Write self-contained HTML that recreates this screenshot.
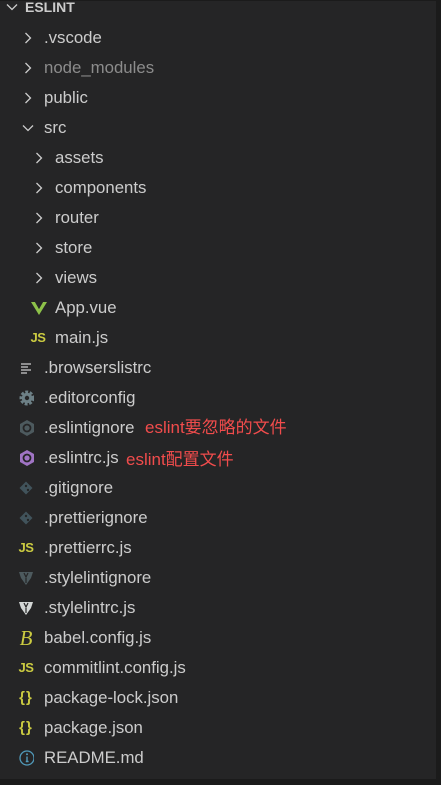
<!DOCTYPE html><html><head><meta charset="utf-8"><style>
body{margin:0;width:441px;height:785px;background:#1b1b1b;overflow:hidden;font-family:"Liberation Sans","Noto Sans CJK SC",sans-serif;}
#p{position:absolute;left:0;top:1px;width:436px;height:778px;background:#252526;}
.r{position:absolute;height:30px;line-height:30px;font-size:16.8px;color:#cccccc;white-space:nowrap}
.i{position:absolute;top:0;height:30px;display:flex;align-items:center;justify-content:center;width:16px}
.js{color:#cbcb41;font-weight:bold;font-size:13px;letter-spacing:-0.5px}
.br{color:#cbcb41;font-weight:bold;font-size:15px;letter-spacing:1px}
.red{color:#f14c4c;position:absolute;font-size:17px}
</style></head><body><div id="p">
<div class="r" style="top:-9px;left:0;font-weight:bold;font-size:14px;color:#ccc"><span class="i" style="left:4px"><svg width="14" height="14"><path d="M2 4.5l5 5 5-5" stroke="#ccc" fill="none" stroke-width="1.3"/></svg></span><span style="position:absolute;left:25px">ESLINT</span></div>

<div class="r" style="top:22px;left:0"><span class="i" style="left:20px"><svg width="14" height="14"><path d="M4.5 2l5 5-5 5" stroke="#ccc" fill="none" stroke-width="1.3"/></svg></span><span style="position:absolute;left:44px">.vscode</span></div>
<div class="r" style="top:52px;left:0;color:#8c8c8c"><span class="i" style="left:20px"><svg width="14" height="14"><path d="M4.5 2l5 5-5 5" stroke="#ccc" fill="none" stroke-width="1.3"/></svg></span><span style="position:absolute;left:44px">node_modules</span></div>
<div class="r" style="top:82px;left:0"><span class="i" style="left:20px"><svg width="14" height="14"><path d="M4.5 2l5 5-5 5" stroke="#ccc" fill="none" stroke-width="1.3"/></svg></span><span style="position:absolute;left:44px">public</span></div>
<div class="r" style="top:112px;left:0"><span class="i" style="left:20px"><svg width="14" height="14"><path d="M2 4.5l5 5 5-5" stroke="#ccc" fill="none" stroke-width="1.3"/></svg></span><span style="position:absolute;left:44px">src</span></div>
<div class="r" style="top:142px;left:0"><span class="i" style="left:31px"><svg width="14" height="14"><path d="M4.5 2l5 5-5 5" stroke="#ccc" fill="none" stroke-width="1.3"/></svg></span><span style="position:absolute;left:55px">assets</span></div>
<div class="r" style="top:172px;left:0"><span class="i" style="left:31px"><svg width="14" height="14"><path d="M4.5 2l5 5-5 5" stroke="#ccc" fill="none" stroke-width="1.3"/></svg></span><span style="position:absolute;left:55px">components</span></div>
<div class="r" style="top:202px;left:0"><span class="i" style="left:31px"><svg width="14" height="14"><path d="M4.5 2l5 5-5 5" stroke="#ccc" fill="none" stroke-width="1.3"/></svg></span><span style="position:absolute;left:55px">router</span></div>
<div class="r" style="top:232px;left:0"><span class="i" style="left:31px"><svg width="14" height="14"><path d="M4.5 2l5 5-5 5" stroke="#ccc" fill="none" stroke-width="1.3"/></svg></span><span style="position:absolute;left:55px">store</span></div>
<div class="r" style="top:262px;left:0"><span class="i" style="left:31px"><svg width="14" height="14"><path d="M4.5 2l5 5-5 5" stroke="#ccc" fill="none" stroke-width="1.3"/></svg></span><span style="position:absolute;left:55px">views</span></div>
<div class="r" style="top:292px;left:0"><span class="i" style="left:31px"><svg width="16" height="14"><path d="M0 1h4l4 7 4-7h4L8 14z" fill="#8dc149"/><path d="M4 1h2.5L8 4l1.5-3H12L8 8z" fill="#252526"/></svg></span><span style="position:absolute;left:55px">App.vue</span></div>
<div class="r" style="top:322px;left:0"><span class="i js" style="left:30px">JS</span><span style="position:absolute;left:55px">main.js</span></div>
<div class="r" style="top:352px;left:0"><span class="i" style="left:18px"><svg width="14" height="14"><path d="M2 3h10M2 6h7M2 9h10M2 12h6" stroke="#ccc" stroke-width="1.3"/></svg></span><span style="position:absolute;left:44px">.browserslistrc</span></div>
<div class="r" style="top:382px;left:0"><span class="i" style="left:18px"><svg width="18" height="18"><circle cx="9" cy="9" r="6" fill="none" stroke="#6d8086" stroke-width="3" stroke-dasharray="2.8 1.6"/><circle cx="9" cy="9" r="5.3" fill="#6d8086"/><circle cx="9" cy="9" r="2.2" fill="#252526"/></svg></span><span style="position:absolute;left:44px">.editorconfig</span></div>
<div class="r" style="top:412px;left:0"><span class="i" style="left:18px"><svg width="18" height="18"><path d="M9 1l7 4v8l-7 4-7-4V5z" fill="#4d5a5e"/><circle cx="9" cy="9" r="3.5" fill="none" stroke="#252526" stroke-width="1.8"/></svg></span><span style="position:absolute;left:44px">.eslintignore</span><span class="red" style="left:145px">eslint要忽略的文件</span></div>
<div class="r" style="top:442px;left:0"><span class="i" style="left:18px"><svg width="18" height="18"><path d="M9 1l7 4v8l-7 4-7-4V5z" fill="#a074c4"/><circle cx="9" cy="9" r="3.5" fill="none" stroke="#252526" stroke-width="1.8"/></svg></span><span style="position:absolute;left:44px">.eslintrc.js</span><span class="red" style="left:126px;top:2px">eslint配置文件</span></div>
<div class="r" style="top:472px;left:0"><span class="i" style="left:18px"><svg width="16" height="16"><path d="M8 1.5L14.5 8 8 14.5 1.5 8z" fill="#41535b"/><circle cx="8" cy="6" r="1.2" fill="#252526"/><circle cx="10" cy="10" r="1.2" fill="#252526"/></svg></span><span style="position:absolute;left:44px">.gitignore</span></div>
<div class="r" style="top:502px;left:0"><span class="i" style="left:18px"><svg width="16" height="16"><path d="M8 1.5L14.5 8 8 14.5 1.5 8z" fill="#41535b"/><circle cx="8" cy="6" r="1.2" fill="#252526"/><circle cx="10" cy="10" r="1.2" fill="#252526"/></svg></span><span style="position:absolute;left:44px">.prettierignore</span></div>
<div class="r" style="top:532px;left:0"><span class="i js" style="left:18px">JS</span><span style="position:absolute;left:44px">.prettierrc.js</span></div>
<div class="r" style="top:562px;left:0"><span class="i" style="left:18px"><svg width="16" height="16"><path d="M1 2h14l-2 6-5 7-5-7z" fill="#4d5a5e"/><path d="M6 3l2 4 2-4M8 8v5" stroke="#252526" stroke-width="1.2" fill="none"/></svg></span><span style="position:absolute;left:44px">.stylelintignore</span></div>
<div class="r" style="top:592px;left:0"><span class="i" style="left:18px"><svg width="16" height="16"><path d="M1 2h14l-2 6-5 7-5-7z" fill="#d4d7d6"/><path d="M6 3l2 4 2-4M8 8v5" stroke="#252526" stroke-width="1.2" fill="none"/></svg></span><span style="position:absolute;left:44px">.stylelintrc.js</span></div>
<div class="r" style="top:622px;left:0"><span class="i" style="left:18px;color:#cbcb41;font-style:italic;font-size:21px;font-family:'Liberation Serif',serif">B</span><span style="position:absolute;left:44px">babel.config.js</span></div>
<div class="r" style="top:652px;left:0"><span class="i js" style="left:18px">JS</span><span style="position:absolute;left:44px">commitlint.config.js</span></div>
<div class="r" style="top:682px;left:0"><span class="i br" style="left:18px">{}</span><span style="position:absolute;left:44px">package-lock.json</span></div>
<div class="r" style="top:712px;left:0"><span class="i br" style="left:18px">{}</span><span style="position:absolute;left:44px">package.json</span></div>
<div class="r" style="top:742px;left:0"><span class="i" style="left:18px"><svg width="18" height="18"><circle cx="9" cy="9" r="7" fill="none" stroke="#519aba" stroke-width="1.3"/><path d="M9 7.5v5M7.8 12.5h2.8" stroke="#519aba" stroke-width="1.4"/><circle cx="9" cy="5.2" r="1" fill="#519aba"/></svg></span><span style="position:absolute;left:44px">README.md</span></div>
</div></body></html>
